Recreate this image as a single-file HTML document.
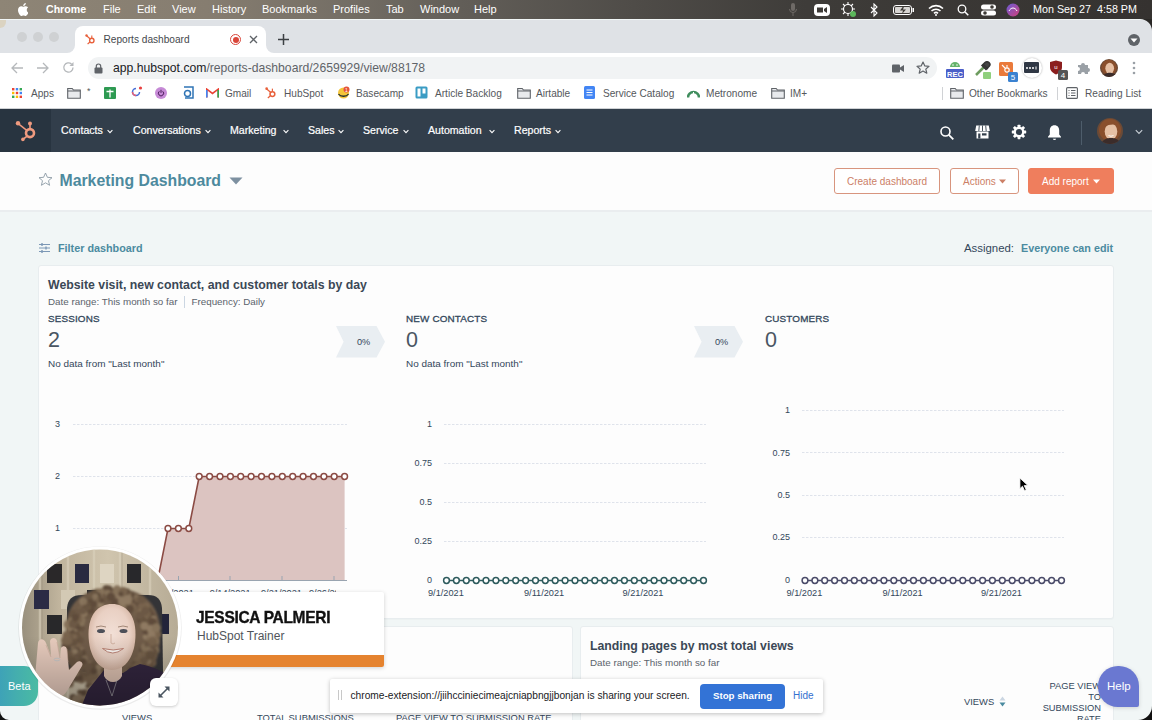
<!DOCTYPE html>
<html><head><meta charset="utf-8">
<style>
*{margin:0;padding:0;box-sizing:border-box}
html,body{width:1152px;height:720px;overflow:hidden;background:#f1f6f6;font-family:"Liberation Sans",sans-serif;position:relative}
.abs{position:absolute}
.t{position:absolute;white-space:nowrap;line-height:1}
#menubar{left:0;top:0;width:1152px;height:19px;background:linear-gradient(90deg,#8e8576 0%,#867d70 18%,#746e65 30%,#625e58 40%,#4f4c48 55%,#3e3c39 70%,#353230 100%)}
.mb{position:absolute;top:3.6px;color:#fff;font-size:11px;line-height:1;white-space:nowrap}
#tabstrip{left:0;top:20px;width:1152px;height:34px;background:#dfe2e6}
#tab{left:75px;top:26px;width:191px;height:28px;background:#fff;border-radius:8px 8px 0 0}
#toolbar{left:0;top:53px;width:1152px;height:31px;background:#fff}
#omni{left:88px;top:57px;width:849px;height:22px;background:#f1f3f4;border-radius:11px}
#bookmarks{left:0;top:83px;width:1152px;height:26px;background:#fff}
.bm{position:absolute;top:88.5px;font-size:10.1px;color:#54575b;line-height:1;white-space:nowrap}
#hsnav{left:0;top:109px;width:1152px;height:43px;background:#323e4b}
#hslogo{left:0;top:109px;width:51px;height:43px;background:#283440}
.nav{position:absolute;top:125px;color:#fff;font-size:10.6px;line-height:1;white-space:nowrap;-webkit-text-stroke:0.2px #fff}
.chev{position:absolute;top:128px;width:5px;height:5px;border-right:1.2px solid #fff;border-bottom:1.2px solid #fff;transform:rotate(45deg)}
#dhead{left:0;top:152px;width:1152px;height:60px;background:#fdfdfd;border-bottom:2px solid #eaedef}
.btn{position:absolute;border:1px solid #d8957e;border-radius:3px;color:#cc8066;font-size:10px;line-height:1;height:26px;background:#fff;white-space:nowrap}
.card{position:absolute;background:#fdfdfd;border:1px solid #e8edef;border-radius:3px;box-shadow:0 1px 1px rgba(0,0,0,0.02)}
</style></head><body>
<!-- mac menu bar -->
<div id="menubar" class="abs"></div>
<svg class="abs" style="left:17.5px;top:2.5px" width="10.5" height="13" viewBox="0 0 814 1000"><path fill="#fff" d="M788.1 340.9c-5.8 4.5-108.2 62.2-108.2 190.5 0 148.4 130.3 200.9 134.2 202.2-.6 3.2-20.7 71.9-68.7 141.9-42.8 61.6-87.5 123.1-155.5 123.1s-85.5-39.5-164-39.5c-76.5 0-103.7 40.8-165.9 40.8s-105.6-57-155.5-127C46.7 790.7 0 663 0 541.8c0-194.4 126.4-297.5 250.8-297.5 66.1 0 121.2 43.4 162.7 43.4 39.5 0 101.1-46 176.3-46 28.5 0 130.9 2.6 198.3 99.2zm-234-181.5c31.1-36.9 53.1-88.1 53.1-139.3 0-7.1-.6-14.3-1.9-20.1-50.6 1.9-110.8 33.7-147.1 75.8-28.5 32.4-55.1 83.6-55.1 135.5 0 7.8 1.3 15.6 1.9 18.1 3.2.6 8.4 1.3 13.6 1.3 45.4 0 102.5-30.4 135.5-71.3z"/></svg>
<span class="mb" style="left:46px;font-weight:bold;font-size:10.6px">Chrome</span>
<span class="mb" style="left:103px">File</span>
<span class="mb" style="left:137px">Edit</span>
<span class="mb" style="left:172px">View</span>
<span class="mb" style="left:212px">History</span>
<span class="mb" style="left:262px">Bookmarks</span>
<span class="mb" style="left:333px">Profiles</span>
<span class="mb" style="left:386px">Tab</span>
<span class="mb" style="left:420px">Window</span>
<span class="mb" style="left:474px">Help</span>
<span class="mb" style="left:1033px;font-size:10.75px">Mon Sep 27&nbsp; 4:58 PM</span>
<!-- menu extras -->
<svg class="abs" style="left:788px;top:3px" width="10" height="14" viewBox="0 0 10 14"><rect x="3" y="0" width="4" height="8" rx="2" fill="#6e6a66"/><path d="M1.5 6a3.5 3.5 0 0 0 7 0M5 10v3" stroke="#6e6a66" stroke-width="1" fill="none"/></svg>
<svg class="abs" style="left:814px;top:3px" width="16" height="14" viewBox="0 0 16 14"><rect x="0" y="1" width="16" height="12" rx="4" fill="#fff"/><path d="M3 4.5h6v5H3zM10 6l3-2v6l-3-2z" fill="#3d3a36"/></svg>
<svg class="abs" style="left:841px;top:2px" width="16" height="16" viewBox="0 0 16 16"><circle cx="7" cy="7" r="4.5" stroke="#fff" stroke-width="1.2" fill="none"/><path d="M7 0v3M7 11v3M0 7h3M11 7h3M2 2l2 2M10 10l2 2M12 2l-2 2M2 12l2-2" stroke="#fff" stroke-width="1.1"/><circle cx="12" cy="12" r="3" fill="#5cb85c"/></svg>
<svg class="abs" style="left:870px;top:3px" width="8" height="14" viewBox="0 0 8 14"><path d="M1 4l6 6-3 3V1l3 3-6 6" stroke="#fff" stroke-width="1.1" fill="none"/></svg>
<svg class="abs" style="left:893px;top:5px" width="22" height="10" viewBox="0 0 22 10"><rect x="0.5" y="0.5" width="18" height="9" rx="2.5" stroke="#fff" fill="none"/><rect x="19.5" y="3" width="1.5" height="4" fill="#fff"/><rect x="2" y="2" width="15" height="6" rx="1" fill="#d8d6d3"/><path d="M10 1.5L7 5.5h3l-1 3.5 4-4.5h-3l1-3z" fill="#3d3a36"/></svg>
<svg class="abs" style="left:928px;top:4px" width="16" height="12" viewBox="0 0 16 12"><path d="M1 4.5a10 10 0 0 1 14 0M3.5 7a6.5 6.5 0 0 1 9 0M6 9.3a3 3 0 0 1 4 0" stroke="#fff" stroke-width="1.6" fill="none"/><circle cx="8" cy="11" r="1" fill="#fff"/></svg>
<svg class="abs" style="left:957px;top:4px" width="12" height="12" viewBox="0 0 12 12"><circle cx="5" cy="5" r="3.8" stroke="#fff" stroke-width="1.3" fill="none"/><path d="M8 8l3.3 3.3" stroke="#fff" stroke-width="1.5"/></svg>
<svg class="abs" style="left:981px;top:4px" width="15" height="12" viewBox="0 0 15 12"><rect x="0" y="0.5" width="15" height="5" rx="2.5" fill="#fff"/><rect x="0" y="6.5" width="15" height="5" rx="2.5" fill="#fff"/><circle cx="11" cy="3" r="1.8" fill="#3d3a36"/><circle cx="4" cy="9" r="1.8" fill="#3d3a36"/></svg>
<svg class="abs" style="left:1006px;top:3px" width="14" height="14" viewBox="0 0 14 14"><defs><linearGradient id="sg" x1="0" y1="0" x2="1" y2="1"><stop offset="0" stop-color="#6a5bd6"/><stop offset="1" stop-color="#d0407a"/></linearGradient></defs><circle cx="7" cy="7" r="6.5" fill="url(#sg)"/><path d="M3 8c2-4 6-4 8 0" stroke="#fff" stroke-width="1" fill="none"/></svg>

<!-- chrome tab strip -->
<div id="tabstrip" class="abs"></div>
<svg class="abs" style="left:1140px;top:19px" width="12" height="12" viewBox="0 0 12 12"><path d="M0 0H12V12A12 12 0 0 0 0 0z" fill="#2a2826"/></svg>
<div class="abs" style="left:0;top:20px;width:6px;height:8px;background:#d8c9a8;border-radius:0 0 6px 0;opacity:.6"></div>
<div class="abs" style="left:17px;top:32px;width:10px;height:10px;border-radius:5px;background:#cfd1d3"></div>
<div class="abs" style="left:32.5px;top:32px;width:10px;height:10px;border-radius:5px;background:#cfd1d3"></div>
<div class="abs" style="left:48.7px;top:32px;width:10px;height:10px;border-radius:5px;background:#cfd1d3"></div>
<div id="tab" class="abs"></div>
<div class="abs" style="left:67px;top:45px;width:8px;height:8px;background:#fff"></div><div class="abs" style="left:67px;top:45px;width:8px;height:8px;background:#dfe2e6;border-bottom-right-radius:8px"></div><div class="abs" style="left:266px;top:45px;width:8px;height:8px;background:#fff"></div><div class="abs" style="left:266px;top:45px;width:8px;height:8px;background:#dfe2e6;border-bottom-left-radius:8px"></div>
<svg class="abs" style="left:85px;top:34px" width="11" height="11" viewBox="0 0 11 11"><circle cx="6.8" cy="6.5" r="2.2" stroke="#e8613c" stroke-width="1.4" fill="none"/><path d="M5.3 5L1.6 1.8M5 8l-2.4 2" stroke="#e8613c" stroke-width="1.2"/><circle cx="1.5" cy="1.5" r="1.2" fill="#e8613c"/><path d="M6.8 4.3V1.5" stroke="#e8613c" stroke-width="1.1"/></svg>
<span class="t" style="left:103.5px;top:35px;font-size:10.15px;color:#46494d">Reports dashboard</span>
<div class="abs" style="left:230px;top:34px;width:11px;height:11px;border-radius:6px;border:1.3px solid #d9463a;background:#fff"></div>
<div class="abs" style="left:232.5px;top:36.5px;width:6px;height:6px;border-radius:3px;background:#d9463a"></div>
<svg class="abs" style="left:249px;top:35px" width="9" height="9" viewBox="0 0 9 9"><path d="M1 1l7 7M8 1L1 8" stroke="#5f6368" stroke-width="1.3"/></svg>
<svg class="abs" style="left:278px;top:34px" width="11" height="11" viewBox="0 0 11 11"><path d="M5.5 0v11M0 5.5h11" stroke="#3c4043" stroke-width="1.5"/></svg>
<div class="abs" style="left:1128px;top:34px;width:12px;height:12px;border-radius:6px;background:#5f6368"></div>
<svg class="abs" style="left:1130px;top:38px" width="8" height="5" viewBox="0 0 8 5"><path d="M0.5 0.5h7L4 4.5z" fill="#fff"/></svg>

<!-- toolbar -->
<div id="toolbar" class="abs"></div>
<svg class="abs" style="left:11px;top:62px" width="13" height="12" viewBox="0 0 13 12"><path d="M12 6H1.5M6 1L1 6l5 5" stroke="#b5b8bb" stroke-width="1.3" fill="none"/></svg>
<svg class="abs" style="left:36px;top:62px" width="13" height="12" viewBox="0 0 13 12"><path d="M1 6h10.5M7 1l5 5-5 5" stroke="#b5b8bb" stroke-width="1.3" fill="none"/></svg>
<svg class="abs" style="left:62px;top:61px" width="13" height="13" viewBox="0 0 13 13"><path d="M11 6.5A4.6 4.6 0 1 1 9.6 3.2" stroke="#b5b8bb" stroke-width="1.3" fill="none"/><path d="M11.5 1v4h-4z" fill="#b5b8bb"/></svg>
<div id="omni" class="abs"></div>
<svg class="abs" style="left:94px;top:63px" width="9" height="11" viewBox="0 0 9 11"><rect x="0.5" y="4.5" width="8" height="6" rx="1" fill="#5f6368"/><path d="M2.3 5V3.2a2.2 2.2 0 0 1 4.4 0V5" stroke="#5f6368" stroke-width="1.2" fill="none"/></svg>
<span class="t" style="left:113px;top:62px;font-size:12.18px;color:#202124">app.hubspot.com<span style="color:#5f6368">/reports-dashboard/2659929/view/88178</span></span>
<svg class="abs" style="left:892px;top:64px" width="12" height="9" viewBox="0 0 12 9"><rect x="0" y="0.5" width="8" height="8" rx="1" fill="#5f6368"/><path d="M8 3.5l4-2.5v7l-4-2.5z" fill="#5f6368"/></svg>
<svg class="abs" style="left:916px;top:61px" width="14" height="14" viewBox="0 0 14 14"><path d="M7 1l1.8 3.9 4.2.4-3.2 2.8 1 4.1L7 10l-3.8 2.2 1-4.1L1 5.3l4.2-.4z" stroke="#5f6368" stroke-width="1.2" fill="none" stroke-linejoin="round"/></svg>
<!-- extensions -->
<svg class="abs" style="left:945px;top:59px" width="20" height="20" viewBox="0 0 20 20"><path d="M5 8a5 5 0 0 1 10 0z" fill="#65b36a"/><circle cx="8" cy="6" r=".8" fill="#fff"/><circle cx="12" cy="6" r=".8" fill="#fff"/><rect x="1" y="10" width="18" height="9" rx="1" fill="#4b5fc9"/><text x="10" y="17.5" font-size="7.5" font-family="Liberation Sans" fill="#fff" text-anchor="middle" font-weight="bold">REC</text></svg>
<svg class="abs" style="left:973px;top:60px" width="20" height="20" viewBox="0 0 20 20"><path d="M3 15L11 7" stroke="#6d9c5f" stroke-width="2.5"/><path d="M10 4l5 5M12 2.5a2 2 0 0 1 4 4l-3 3-4-4z" stroke="#333" stroke-width="1.5" fill="#444"/><rect x="10" y="12" width="8" height="7" rx="1" fill="#8fcf7d"/></svg>
<svg class="abs" style="left:999px;top:61.5px" width="20" height="20" viewBox="0 0 20 20"><rect x="0" y="0" width="14" height="14" rx="1.5" fill="#ea7a3b"/><circle cx="8" cy="8" r="2.2" stroke="#fff" stroke-width="1.2" fill="none"/><path d="M6.5 6.5L3 3M8 5.8V3" stroke="#fff" stroke-width="1.1"/><rect x="9" y="10" width="10" height="10" rx="1.5" fill="#3b82d1"/><text x="14" y="18.3" font-size="8" font-family="Liberation Sans" fill="#fff" text-anchor="middle">5</text></svg>
<div class="abs" style="left:1022px;top:58px;width:20px;height:20px;border-radius:10px;background:#fff;box-shadow:0 0 2px rgba(0,0,0,.35)"></div>
<div class="abs" style="left:1024px;top:62px;width:15px;height:11px;background:#303845;border-radius:1px"></div>
<svg class="abs" style="left:1025px;top:66px" width="13" height="4" viewBox="0 0 13 4"><circle cx="2" cy="2" r="1" fill="#fff"/><circle cx="5" cy="2" r="1" fill="#fff"/><circle cx="8" cy="2" r="1" fill="#fff"/><rect x="10.5" y="0.5" width="1" height="3" fill="#fff"/></svg>
<svg class="abs" style="left:1050px;top:60px" width="20" height="20" viewBox="0 0 20 20"><path d="M6 0.5l6 1.5v5c0 4-3 6-6 7.5C3 13 0 11 0 7V2z" fill="#8b1e1e"/><text x="6" y="8.5" font-size="6" font-family="Liberation Sans" fill="#fff" text-anchor="middle">u</text><rect x="8" y="10" width="10" height="10" rx="1.5" fill="#555"/><text x="13" y="18.3" font-size="8" font-family="Liberation Sans" fill="#fff" text-anchor="middle">4</text></svg>
<svg class="abs" style="left:1076px;top:61px" width="14" height="14" viewBox="0 0 14 14"><path d="M2 4h3a2 2 0 0 1 4 0h3v3a2 2 0 0 1 0 4v2H9a2 2 0 0 0-4 0H2v-3a2 2 0 0 0 0-4z" fill="#9aa0a6"/></svg>
<svg class="abs" style="left:1099.5px;top:59px" width="18" height="18" viewBox="0 0 26 26"><defs><clipPath id="av2"><circle cx="13" cy="13" r="13"/></clipPath></defs><g clip-path="url(#av2)"><rect width="26" height="26" fill="#6b4a36"/><circle cx="13" cy="12" r="11" fill="#8a4f2c"/><ellipse cx="14" cy="13.5" rx="6.3" ry="8" fill="#e6c0a4"/><path d="M4 26c2-5 6-6 10-6s8 1 10 6z" fill="#3b2c2a"/></g></svg>
<svg class="abs" style="left:1132px;top:61px" width="4" height="14" viewBox="0 0 4 14"><circle cx="2" cy="2" r="1.3" fill="#9aa0a6"/><circle cx="2" cy="7" r="1.3" fill="#9aa0a6"/><circle cx="2" cy="12" r="1.3" fill="#9aa0a6"/></svg>

<!-- bookmarks -->
<div id="bookmarks" class="abs"></div>
<svg class="abs" style="left:12px;top:88px" width="10" height="10" viewBox="0 0 10 10"><g><rect x="0" y="0" width="2.4" height="2.4" fill="#ea4335"/><rect x="3.8" y="0" width="2.4" height="2.4" fill="#4285f4"/><rect x="7.6" y="0" width="2.4" height="2.4" fill="#34a853"/><rect x="0" y="3.8" width="2.4" height="2.4" fill="#fbbc05"/><rect x="3.8" y="3.8" width="2.4" height="2.4" fill="#ea4335"/><rect x="7.6" y="3.8" width="2.4" height="2.4" fill="#4285f4"/><rect x="0" y="7.6" width="2.4" height="2.4" fill="#34a853"/><rect x="3.8" y="7.6" width="2.4" height="2.4" fill="#fbbc05"/><rect x="7.6" y="7.6" width="2.4" height="2.4" fill="#ea4335"/></g></svg>
<span class="bm" style="left:31px">Apps</span>
<svg class="abs" style="left:67px;top:87px" width="14" height="12" viewBox="0 0 14 12"><path d="M0.7 1.5h4.5l1.3 1.5h6.8v8.3H0.7z" stroke="#5f6368" stroke-width="1.1" fill="#e8eaed"/><path d="M0.7 4h12.6" stroke="#5f6368" stroke-width="1"/></svg>
<span class="bm" style="left:87px;top:87px;font-size:9px">*</span>
<div class="abs" style="left:104px;top:87px;width:12px;height:12px;background:#2e9a52;border-radius:1px"></div>
<svg class="abs" style="left:104px;top:87px" width="12" height="12" viewBox="0 0 12 12"><path d="M6 2.5v8M2.5 4.5h7" stroke="#fff" stroke-width="1.3"/></svg>
<svg class="abs" style="left:130px;top:86px" width="13" height="13" viewBox="0 0 13 13"><path d="M9.5 6A3.5 3.5 0 1 1 6 2.5" stroke="#4a6fd8" stroke-width="1.5" fill="none"/><path d="M6 9.5A3.5 3.5 0 0 1 2.5 6" stroke="#e85d75" stroke-width="1.5" fill="none"/><circle cx="10.5" cy="2" r="1.6" fill="#e84040"/></svg>
<div class="abs" style="left:155px;top:87px;width:12px;height:12px;border-radius:6px;background:#c68ad6"></div>
<svg class="abs" style="left:157px;top:89px" width="8" height="8" viewBox="0 0 8 8"><path d="M2.3 2.3A2.6 2.6 0 1 0 5.7 2.3" stroke="#4a1c5a" stroke-width="1" fill="none"/><path d="M4 0.8v3" stroke="#4a1c5a" stroke-width="1"/></svg>
<svg class="abs" style="left:181px;top:86px" width="13" height="13" viewBox="0 0 13 13"><path d="M3 1h9v11H4" stroke="#2f74b5" stroke-width="1.5" fill="none"/><circle cx="6.5" cy="7.5" r="3" stroke="#2f74b5" stroke-width="1.5" fill="none"/></svg>
<svg class="abs" style="left:206px;top:88px" width="13" height="10" viewBox="0 0 13 10"><path d="M0.8 9.5V1.2L6.5 5.5l5.7-4.3v8.3" stroke="#ea4335" stroke-width="1.6" fill="none"/><path d="M0.8 9.5V2" stroke="#4285f4" stroke-width="1.6"/><path d="M12.2 9.5V2" stroke="#34a853" stroke-width="1.6"/></svg>
<span class="bm" style="left:225px">Gmail</span>
<svg class="abs" style="left:265px;top:87px" width="12" height="12" viewBox="0 0 11 11"><circle cx="6.8" cy="6.5" r="2.2" stroke="#e8613c" stroke-width="1.4" fill="none"/><path d="M5.3 5L1.6 1.8M5 8l-2.4 2" stroke="#e8613c" stroke-width="1.2"/><circle cx="1.5" cy="1.5" r="1.2" fill="#e8613c"/><path d="M6.8 4.3V1.5" stroke="#e8613c" stroke-width="1.1"/></svg>
<span class="bm" style="left:284px">HubSpot</span>
<svg class="abs" style="left:337px;top:86px" width="13" height="13" viewBox="0 0 13 13"><circle cx="6.5" cy="7" r="5.5" fill="#f4c53a"/><path d="M1.5 8c2 3 8 3 10 0" stroke="#1d2d35" stroke-width="1.3" fill="none"/><circle cx="9.5" cy="3.5" r="3" fill="#e5533a"/><text x="9.5" y="5.7" font-size="5" font-family="Liberation Sans" fill="#fff" text-anchor="middle">1</text></svg>
<span class="bm" style="left:356px">Basecamp</span>
<svg class="abs" style="left:415px;top:86px" width="13" height="13" viewBox="0 0 13 13"><rect x="0.5" y="0.5" width="12" height="12" rx="1.5" fill="#3a9cc4"/><rect x="2.5" y="2.5" width="3" height="8" fill="#fff"/><rect x="7.5" y="2.5" width="3" height="5" fill="#fff"/></svg>
<span class="bm" style="left:435px">Article Backlog</span>
<svg class="abs" style="left:517px;top:87px" width="14" height="12" viewBox="0 0 14 12"><path d="M0.7 1.5h4.5l1.3 1.5h6.8v8.3H0.7z" stroke="#5f6368" stroke-width="1.1" fill="#e8eaed"/><path d="M0.7 4h12.6" stroke="#5f6368" stroke-width="1"/></svg>
<span class="bm" style="left:536px">Airtable</span>
<svg class="abs" style="left:584px;top:86px" width="11" height="13" viewBox="0 0 11 13"><rect x="0" y="0" width="11" height="13" rx="1.5" fill="#4285f4"/><path d="M2.5 4h6M2.5 6.5h6M2.5 9h6" stroke="#fff" stroke-width="1.1"/></svg>
<span class="bm" style="left:603px">Service Catalog</span>
<svg class="abs" style="left:687px;top:87px" width="13" height="11" viewBox="0 0 13 11"><path d="M1 10.5A5.5 5.5 0 0 1 12 10.5" stroke="#3f8d5d" stroke-width="2.6" fill="none"/><path d="M6.5 5v5" stroke="#fff" stroke-width="1"/></svg>
<span class="bm" style="left:706px">Metronome</span>
<svg class="abs" style="left:771px;top:87px" width="14" height="12" viewBox="0 0 14 12"><path d="M0.7 1.5h4.5l1.3 1.5h6.8v8.3H0.7z" stroke="#5f6368" stroke-width="1.1" fill="#e8eaed"/><path d="M0.7 4h12.6" stroke="#5f6368" stroke-width="1"/></svg>
<span class="bm" style="left:790px">IM+</span>
<div class="abs" style="left:942px;top:87px;width:1px;height:13px;background:#d0d2d5"></div>
<svg class="abs" style="left:950px;top:87px" width="14" height="12" viewBox="0 0 14 12"><path d="M0.7 1.5h4.5l1.3 1.5h6.8v8.3H0.7z" stroke="#5f6368" stroke-width="1.1" fill="#e8eaed"/><path d="M0.7 4h12.6" stroke="#5f6368" stroke-width="1"/></svg>
<span class="bm" style="left:969px">Other Bookmarks</span>
<div class="abs" style="left:1057px;top:87px;width:1px;height:13px;background:#d0d2d5"></div>
<svg class="abs" style="left:1066px;top:87px" width="12" height="12" viewBox="0 0 12 12"><rect x="0.6" y="0.6" width="10.8" height="10.8" rx="1" stroke="#5f6368" stroke-width="1.1" fill="none"/><path d="M2.5 3.5h1M5 3.5h4.5M2.5 6h1M5 6h4.5M2.5 8.5h1M5 8.5h4.5" stroke="#5f6368" stroke-width="1"/></svg>
<span class="bm" style="left:1085px">Reading List</span>

<div class="abs" style="left:0;top:108px;width:1152px;height:1px;background:#cfd2d5"></div>

<!-- hubspot nav -->
<div id="hsnav" class="abs"></div>
<div id="hslogo" class="abs"></div>
<svg class="abs" style="left:14px;top:118px" width="24" height="26" viewBox="0 0 24 26"><g fill="#ef9a7f" stroke="#ef9a7f"><circle cx="16" cy="15.1" r="4" stroke-width="2.6" fill="none"/><path d="M12.8 12.4L4.5 5.8" stroke-width="1.5"/><circle cx="4" cy="5.2" r="2.2" stroke="none"/><path d="M16 11V6" stroke-width="1.6"/><circle cx="16" cy="5.5" r="2" stroke="none"/><path d="M13.2 18.2L9.3 21" stroke-width="1.6"/><circle cx="8.9" cy="21.4" r="1.8" stroke="none"/></g></svg>
<span class="nav" style="left:61px">Contacts</span><svg class="abs" style="left:107px;top:128.5px" width="6" height="5" viewBox="0 0 6 5"><path d="M0.6 1.2L3 3.6 5.4 1.2" stroke="#fff" stroke-width="1.1" fill="none"/></svg>
<span class="nav" style="left:133px">Conversations</span><svg class="abs" style="left:204.5px;top:128.5px" width="6" height="5" viewBox="0 0 6 5"><path d="M0.6 1.2L3 3.6 5.4 1.2" stroke="#fff" stroke-width="1.1" fill="none"/></svg>
<span class="nav" style="left:230px">Marketing</span><svg class="abs" style="left:283.3px;top:128.5px" width="6" height="5" viewBox="0 0 6 5"><path d="M0.6 1.2L3 3.6 5.4 1.2" stroke="#fff" stroke-width="1.1" fill="none"/></svg>
<span class="nav" style="left:308px">Sales</span><svg class="abs" style="left:338px;top:128.5px" width="6" height="5" viewBox="0 0 6 5"><path d="M0.6 1.2L3 3.6 5.4 1.2" stroke="#fff" stroke-width="1.1" fill="none"/></svg>
<span class="nav" style="left:363px">Service</span><svg class="abs" style="left:402.5px;top:128.5px" width="6" height="5" viewBox="0 0 6 5"><path d="M0.6 1.2L3 3.6 5.4 1.2" stroke="#fff" stroke-width="1.1" fill="none"/></svg>
<span class="nav" style="left:428px">Automation</span><svg class="abs" style="left:489px;top:128.5px" width="6" height="5" viewBox="0 0 6 5"><path d="M0.6 1.2L3 3.6 5.4 1.2" stroke="#fff" stroke-width="1.1" fill="none"/></svg>
<span class="nav" style="left:514px">Reports</span><svg class="abs" style="left:555px;top:128.5px" width="6" height="5" viewBox="0 0 6 5"><path d="M0.6 1.2L3 3.6 5.4 1.2" stroke="#fff" stroke-width="1.1" fill="none"/></svg>
<svg class="abs" style="left:940px;top:125.5px" width="14" height="14" viewBox="0 0 14 14"><circle cx="5.5" cy="5.5" r="4.5" stroke="#fff" stroke-width="1.6" fill="none"/><path d="M8.8 8.8l4.5 4.5" stroke="#fff" stroke-width="1.8"/></svg>
<svg class="abs" style="left:975px;top:125px" width="15" height="14" viewBox="0 0 15 14"><path d="M1.2 0.5h12.6l1 5.5H0.2z" fill="#fff"/><path d="M4.3 0.5l-0.5 5.5M7.5 0.5v5.5M10.7 0.5l0.5 5.5" stroke="#323e4b" stroke-width="0.9"/><path d="M1.5 6.5h12v7h-12z" fill="#fff"/><rect x="3.2" y="8.5" width="2.2" height="5" fill="#323e4b"/><rect x="7" y="8.3" width="4.5" height="2.2" fill="#323e4b"/></svg>
<svg class="abs" style="left:1011px;top:124px" width="16" height="16" viewBox="0 0 16 16"><g fill="#fff"><circle cx="8" cy="8" r="5.4"/><rect x="6.6" y="0.8" width="2.8" height="3.2" rx="0.4" transform="rotate(0 8 8)"/><rect x="6.6" y="0.8" width="2.8" height="3.2" rx="0.4" transform="rotate(45 8 8)"/><rect x="6.6" y="0.8" width="2.8" height="3.2" rx="0.4" transform="rotate(90 8 8)"/><rect x="6.6" y="0.8" width="2.8" height="3.2" rx="0.4" transform="rotate(135 8 8)"/><rect x="6.6" y="0.8" width="2.8" height="3.2" rx="0.4" transform="rotate(180 8 8)"/><rect x="6.6" y="0.8" width="2.8" height="3.2" rx="0.4" transform="rotate(225 8 8)"/><rect x="6.6" y="0.8" width="2.8" height="3.2" rx="0.4" transform="rotate(270 8 8)"/><rect x="6.6" y="0.8" width="2.8" height="3.2" rx="0.4" transform="rotate(315 8 8)"/></g><circle cx="8" cy="8" r="3.1" fill="#323e4b"/></svg>
<svg class="abs" style="left:1047px;top:124px" width="15" height="17" viewBox="0 0 15 17"><path d="M7.5 1.2c-3 0-4.7 2.3-4.7 5v4.3L1 12.8v0.8h13v-0.8l-1.8-2.3V6.2c0-2.7-1.7-5-4.7-5z" fill="#fff"/><path d="M5.8 14.8a1.8 1.8 0 0 0 3.4 0z" fill="#fff"/></svg>
<div class="abs" style="left:1081px;top:121px;width:1px;height:24px;background:#4e5d6b"></div>
<svg class="abs" style="left:1097px;top:118px" width="26" height="26" viewBox="0 0 26 26"><defs><clipPath id="av1"><circle cx="13" cy="13" r="13"/></clipPath></defs><g clip-path="url(#av1)"><rect width="26" height="26" fill="#6b4a36"/><circle cx="13" cy="12" r="11" fill="#8a4f2c"/><ellipse cx="14" cy="13.5" rx="6.3" ry="8" fill="#e6c0a4"/><path d="M8 6c3-3 9-3 12 1-3-1-9-1-12 2z" fill="#8a4f2c"/><path d="M4 26c2-5 6-6 10-6s8 1 10 6z" fill="#3b2c2a"/><path d="M11.5 17.5q2.5 1.5 5 0" stroke="#fff" stroke-width="0.9" fill="none"/></g></svg>
<svg class="abs" style="left:1134.5px;top:129px" width="8" height="6" viewBox="0 0 8 6"><path d="M0.8 1.2L4 4.4 7.2 1.2" stroke="#c9d0d6" stroke-width="1.1" fill="none"/></svg>


<!-- dashboard header -->
<div id="dhead" class="abs"></div>
<svg class="abs" style="left:38px;top:172px" width="15" height="15" viewBox="0 0 15 15"><path d="M7.5 1l1.9 4.3 4.6.4-3.5 3 1.1 4.6-4.1-2.5-4.1 2.5 1.1-4.6-3.5-3 4.6-.4z" stroke="#8b9aa5" stroke-width="0.9" fill="none" stroke-linejoin="round"/></svg>
<span class="t" style="left:59.5px;top:172.7px;font-size:15.8px;font-weight:bold;color:#4d8a9e">Marketing Dashboard</span>
<svg class="abs" style="left:229px;top:177px" width="14" height="8" viewBox="0 0 14 8"><path d="M0.5 0.5h13L7 7.5z" fill="#7d90a0"/></svg>
<div class="btn" style="left:834px;top:168px;width:106px"><span class="t" style="left:12px;top:7.5px">Create dashboard</span></div>
<div class="btn" style="left:950px;top:168px;width:69px"><span class="t" style="left:12px;top:7.5px">Actions</span><svg class="abs" style="left:48px;top:10px" width="7" height="5" viewBox="0 0 7 5"><path d="M0 0.5h7L3.5 4.5z" fill="#cc8066"/></svg></div>
<div class="btn" style="left:1028px;top:168px;width:86px;background:#ef7e5d;border-color:#ef7e5d;color:#fff"><span class="t" style="left:13px;top:7.5px">Add report</span><svg class="abs" style="left:64px;top:10px" width="7" height="5" viewBox="0 0 7 5"><path d="M0 0.5h7L3.5 4.5z" fill="#fff"/></svg></div>


<!-- cards -->
<div class="card" style="left:38px;top:265px;width:1076px;height:354px"></div>
<div class="card" style="left:38px;top:626px;width:535px;height:120px"></div>
<div class="card" style="left:580px;top:626px;width:534px;height:120px"></div>
<!--CONTENT_START-->
<svg class="abs" style="left:39px;top:243px" width="11" height="10" viewBox="0 0 11 10"><path d="M0 1.5h11M0 5h11M0 8.5h11" stroke="#7c98b6" stroke-width="1.1"/><path d="M3 0v3M7 3.5v3M3 7v3" stroke="#7c98b6" stroke-width="1.4"/></svg>
<span class="t" style="left:58px;top:243px;font-size:10.8px;color:#4b8ba0;font-weight:bold;">Filter dashboard</span>
<span class="t" style="left:964px;top:243px;font-size:11.4px;color:#33475b;font-weight:normal;">Assigned:</span>
<span class="t" style="left:1021px;top:243px;font-size:10.75px;color:#4b8ba0;font-weight:bold;">Everyone can edit</span>
<span class="t" style="left:48px;top:279px;font-size:12.3px;color:#3b4856;font-weight:bold;">Website visit, new contact, and customer totals by day</span>
<span class="t" style="left:48px;top:297.4px;font-size:9.8px;color:#5b636c;font-weight:normal;">Date range: This month so far</span>
<div class="abs" style="left:184px;top:296px;width:1px;height:12px;background:#cbd6e2"></div>
<span class="t" style="left:191.5px;top:297.4px;font-size:9.8px;color:#5b636c;font-weight:normal;">Frequency: Daily</span>
<span class="t" style="left:48px;top:314px;font-size:9.9px;color:#33475b;font-weight:normal;letter-spacing:0.15px;-webkit-text-stroke:0.3px #33475b">SESSIONS</span>
<span class="t" style="left:48px;top:330px;font-size:21.5px;color:#4a5663;font-weight:normal;">2</span>
<span class="t" style="left:48px;top:358.5px;font-size:9.95px;color:#33475b;font-weight:normal;">No data from "Last month"</span>
<span class="t" style="left:406px;top:314px;font-size:9.9px;color:#33475b;font-weight:normal;letter-spacing:0.15px;-webkit-text-stroke:0.3px #33475b">NEW CONTACTS</span>
<span class="t" style="left:406px;top:330px;font-size:21.5px;color:#4a5663;font-weight:normal;">0</span>
<span class="t" style="left:406px;top:358.5px;font-size:9.95px;color:#33475b;font-weight:normal;">No data from "Last month"</span>
<span class="t" style="left:765px;top:314px;font-size:9.9px;color:#33475b;font-weight:normal;letter-spacing:0.15px;-webkit-text-stroke:0.3px #33475b">CUSTOMERS</span>
<span class="t" style="left:765px;top:330px;font-size:21.5px;color:#4a5663;font-weight:normal;">0</span>
<svg class="abs" style="left:336px;top:326px" width="50" height="32" viewBox="0 0 50 32"><path d="M0 0H40.5L49 15.7 40.5 31.4H0L7.6 15.7z" fill="#e9eef2"/></svg>
<span class="t" style="left:357px;top:337.5px;font-size:9.2px;color:#33475b;font-weight:normal;">0%</span>
<svg class="abs" style="left:694px;top:326px" width="50" height="32" viewBox="0 0 50 32"><path d="M0 0H40.5L49 15.7 40.5 31.4H0L7.6 15.7z" fill="#e9eef2"/></svg>
<span class="t" style="left:715px;top:337.5px;font-size:9.2px;color:#33475b;font-weight:normal;">0%</span>
<svg class="abs" style="left:0;top:0" width="1152" height="720" viewBox="0 0 1152 720">
<path d="M73 424.5H347" stroke="#dfe3eb" stroke-width="1" stroke-dasharray="2.5 1.5"/>
<path d="M73 476.5H347" stroke="#dfe3eb" stroke-width="1" stroke-dasharray="2.5 1.5"/>
<path d="M73 528.5H347" stroke="#dfe3eb" stroke-width="1" stroke-dasharray="2.5 1.5"/>
<polygon points="74.5,580.5 74.5,580.5 84.9,580.5 95.3,580.5 105.7,580.5 116.1,580.5 126.5,580.5 136.8,580.5 147.2,580.5 157.6,580.5 168.0,528.5 178.4,528.5 188.8,528.5 199.2,476.5 209.6,476.5 220.0,476.5 230.4,476.5 240.7,476.5 251.1,476.5 261.5,476.5 271.9,476.5 282.3,476.5 292.7,476.5 303.1,476.5 313.5,476.5 323.9,476.5 334.2,476.5 344.6,476.5 344.64,580.5" fill="#dcc4c1"/>
<polyline points="74.5,580.5 84.9,580.5 95.3,580.5 105.7,580.5 116.1,580.5 126.5,580.5 136.8,580.5 147.2,580.5 157.6,580.5 168.0,528.5 178.4,528.5 188.8,528.5 199.2,476.5 209.6,476.5 220.0,476.5 230.4,476.5 240.7,476.5 251.1,476.5 261.5,476.5 271.9,476.5 282.3,476.5 292.7,476.5 303.1,476.5 313.5,476.5 323.9,476.5 334.2,476.5 344.6,476.5" fill="none" stroke="#8b4b44" stroke-width="1.6"/>
<path d="M73 580.5H347" stroke="#99a4b0" stroke-width="1"/>
<path d="M178.5 576V580" stroke="#99a4b0" stroke-width="1"/>
<path d="M230 576V580" stroke="#99a4b0" stroke-width="1"/>
<path d="M282 576V580" stroke="#99a4b0" stroke-width="1"/>
<path d="M334 576V580" stroke="#99a4b0" stroke-width="1"/>
<circle cx="168.0" cy="528.5" r="2.9" fill="#fff" stroke="#8b4b44" stroke-width="1.5"/><circle cx="178.4" cy="528.5" r="2.9" fill="#fff" stroke="#8b4b44" stroke-width="1.5"/><circle cx="188.8" cy="528.5" r="2.9" fill="#fff" stroke="#8b4b44" stroke-width="1.5"/><circle cx="199.2" cy="476.5" r="2.9" fill="#fff" stroke="#8b4b44" stroke-width="1.5"/><circle cx="209.6" cy="476.5" r="2.9" fill="#fff" stroke="#8b4b44" stroke-width="1.5"/><circle cx="220.0" cy="476.5" r="2.9" fill="#fff" stroke="#8b4b44" stroke-width="1.5"/><circle cx="230.4" cy="476.5" r="2.9" fill="#fff" stroke="#8b4b44" stroke-width="1.5"/><circle cx="240.7" cy="476.5" r="2.9" fill="#fff" stroke="#8b4b44" stroke-width="1.5"/><circle cx="251.1" cy="476.5" r="2.9" fill="#fff" stroke="#8b4b44" stroke-width="1.5"/><circle cx="261.5" cy="476.5" r="2.9" fill="#fff" stroke="#8b4b44" stroke-width="1.5"/><circle cx="271.9" cy="476.5" r="2.9" fill="#fff" stroke="#8b4b44" stroke-width="1.5"/><circle cx="282.3" cy="476.5" r="2.9" fill="#fff" stroke="#8b4b44" stroke-width="1.5"/><circle cx="292.7" cy="476.5" r="2.9" fill="#fff" stroke="#8b4b44" stroke-width="1.5"/><circle cx="303.1" cy="476.5" r="2.9" fill="#fff" stroke="#8b4b44" stroke-width="1.5"/><circle cx="313.5" cy="476.5" r="2.9" fill="#fff" stroke="#8b4b44" stroke-width="1.5"/><circle cx="323.9" cy="476.5" r="2.9" fill="#fff" stroke="#8b4b44" stroke-width="1.5"/><circle cx="334.2" cy="476.5" r="2.9" fill="#fff" stroke="#8b4b44" stroke-width="1.5"/><circle cx="344.6" cy="476.5" r="2.9" fill="#fff" stroke="#8b4b44" stroke-width="1.5"/>
<path d="M444 424.5H706" stroke="#dfe3eb" stroke-width="1" stroke-dasharray="2.5 1.5"/>
<path d="M444 463.5H706" stroke="#dfe3eb" stroke-width="1" stroke-dasharray="2.5 1.5"/>
<path d="M444 502.5H706" stroke="#dfe3eb" stroke-width="1" stroke-dasharray="2.5 1.5"/>
<path d="M444 541.5H706" stroke="#dfe3eb" stroke-width="1" stroke-dasharray="2.5 1.5"/>
<path d="M446 580.5H704" stroke="#2e5b5d" stroke-width="1.6"/>
<circle cx="446.5" cy="580.5" r="2.9" fill="#fff" stroke="#2e5b5d" stroke-width="1.5"/><circle cx="456.4" cy="580.5" r="2.9" fill="#fff" stroke="#2e5b5d" stroke-width="1.5"/><circle cx="466.3" cy="580.5" r="2.9" fill="#fff" stroke="#2e5b5d" stroke-width="1.5"/><circle cx="476.2" cy="580.5" r="2.9" fill="#fff" stroke="#2e5b5d" stroke-width="1.5"/><circle cx="486.0" cy="580.5" r="2.9" fill="#fff" stroke="#2e5b5d" stroke-width="1.5"/><circle cx="495.9" cy="580.5" r="2.9" fill="#fff" stroke="#2e5b5d" stroke-width="1.5"/><circle cx="505.8" cy="580.5" r="2.9" fill="#fff" stroke="#2e5b5d" stroke-width="1.5"/><circle cx="515.7" cy="580.5" r="2.9" fill="#fff" stroke="#2e5b5d" stroke-width="1.5"/><circle cx="525.6" cy="580.5" r="2.9" fill="#fff" stroke="#2e5b5d" stroke-width="1.5"/><circle cx="535.5" cy="580.5" r="2.9" fill="#fff" stroke="#2e5b5d" stroke-width="1.5"/><circle cx="545.3" cy="580.5" r="2.9" fill="#fff" stroke="#2e5b5d" stroke-width="1.5"/><circle cx="555.2" cy="580.5" r="2.9" fill="#fff" stroke="#2e5b5d" stroke-width="1.5"/><circle cx="565.1" cy="580.5" r="2.9" fill="#fff" stroke="#2e5b5d" stroke-width="1.5"/><circle cx="575.0" cy="580.5" r="2.9" fill="#fff" stroke="#2e5b5d" stroke-width="1.5"/><circle cx="584.9" cy="580.5" r="2.9" fill="#fff" stroke="#2e5b5d" stroke-width="1.5"/><circle cx="594.8" cy="580.5" r="2.9" fill="#fff" stroke="#2e5b5d" stroke-width="1.5"/><circle cx="604.7" cy="580.5" r="2.9" fill="#fff" stroke="#2e5b5d" stroke-width="1.5"/><circle cx="614.5" cy="580.5" r="2.9" fill="#fff" stroke="#2e5b5d" stroke-width="1.5"/><circle cx="624.4" cy="580.5" r="2.9" fill="#fff" stroke="#2e5b5d" stroke-width="1.5"/><circle cx="634.3" cy="580.5" r="2.9" fill="#fff" stroke="#2e5b5d" stroke-width="1.5"/><circle cx="644.2" cy="580.5" r="2.9" fill="#fff" stroke="#2e5b5d" stroke-width="1.5"/><circle cx="654.1" cy="580.5" r="2.9" fill="#fff" stroke="#2e5b5d" stroke-width="1.5"/><circle cx="664.0" cy="580.5" r="2.9" fill="#fff" stroke="#2e5b5d" stroke-width="1.5"/><circle cx="673.8" cy="580.5" r="2.9" fill="#fff" stroke="#2e5b5d" stroke-width="1.5"/><circle cx="683.7" cy="580.5" r="2.9" fill="#fff" stroke="#2e5b5d" stroke-width="1.5"/><circle cx="693.6" cy="580.5" r="2.9" fill="#fff" stroke="#2e5b5d" stroke-width="1.5"/><circle cx="703.5" cy="580.5" r="2.9" fill="#fff" stroke="#2e5b5d" stroke-width="1.5"/>
<path d="M802 410.5H1064" stroke="#dfe3eb" stroke-width="1" stroke-dasharray="2.5 1.5"/>
<path d="M802 452.5H1064" stroke="#dfe3eb" stroke-width="1" stroke-dasharray="2.5 1.5"/>
<path d="M802 495.5H1064" stroke="#dfe3eb" stroke-width="1" stroke-dasharray="2.5 1.5"/>
<path d="M802 537.5H1064" stroke="#dfe3eb" stroke-width="1" stroke-dasharray="2.5 1.5"/>
<path d="M805 580.5H1062" stroke="#4a4b69" stroke-width="1.6"/>
<circle cx="805.0" cy="580.5" r="2.9" fill="#fff" stroke="#4a4b69" stroke-width="1.5"/><circle cx="814.9" cy="580.5" r="2.9" fill="#fff" stroke="#4a4b69" stroke-width="1.5"/><circle cx="824.7" cy="580.5" r="2.9" fill="#fff" stroke="#4a4b69" stroke-width="1.5"/><circle cx="834.6" cy="580.5" r="2.9" fill="#fff" stroke="#4a4b69" stroke-width="1.5"/><circle cx="844.5" cy="580.5" r="2.9" fill="#fff" stroke="#4a4b69" stroke-width="1.5"/><circle cx="854.3" cy="580.5" r="2.9" fill="#fff" stroke="#4a4b69" stroke-width="1.5"/><circle cx="864.2" cy="580.5" r="2.9" fill="#fff" stroke="#4a4b69" stroke-width="1.5"/><circle cx="874.1" cy="580.5" r="2.9" fill="#fff" stroke="#4a4b69" stroke-width="1.5"/><circle cx="883.9" cy="580.5" r="2.9" fill="#fff" stroke="#4a4b69" stroke-width="1.5"/><circle cx="893.8" cy="580.5" r="2.9" fill="#fff" stroke="#4a4b69" stroke-width="1.5"/><circle cx="903.7" cy="580.5" r="2.9" fill="#fff" stroke="#4a4b69" stroke-width="1.5"/><circle cx="913.5" cy="580.5" r="2.9" fill="#fff" stroke="#4a4b69" stroke-width="1.5"/><circle cx="923.4" cy="580.5" r="2.9" fill="#fff" stroke="#4a4b69" stroke-width="1.5"/><circle cx="933.2" cy="580.5" r="2.9" fill="#fff" stroke="#4a4b69" stroke-width="1.5"/><circle cx="943.1" cy="580.5" r="2.9" fill="#fff" stroke="#4a4b69" stroke-width="1.5"/><circle cx="953.0" cy="580.5" r="2.9" fill="#fff" stroke="#4a4b69" stroke-width="1.5"/><circle cx="962.8" cy="580.5" r="2.9" fill="#fff" stroke="#4a4b69" stroke-width="1.5"/><circle cx="972.7" cy="580.5" r="2.9" fill="#fff" stroke="#4a4b69" stroke-width="1.5"/><circle cx="982.6" cy="580.5" r="2.9" fill="#fff" stroke="#4a4b69" stroke-width="1.5"/><circle cx="992.4" cy="580.5" r="2.9" fill="#fff" stroke="#4a4b69" stroke-width="1.5"/><circle cx="1002.3" cy="580.5" r="2.9" fill="#fff" stroke="#4a4b69" stroke-width="1.5"/><circle cx="1012.2" cy="580.5" r="2.9" fill="#fff" stroke="#4a4b69" stroke-width="1.5"/><circle cx="1022.0" cy="580.5" r="2.9" fill="#fff" stroke="#4a4b69" stroke-width="1.5"/><circle cx="1031.9" cy="580.5" r="2.9" fill="#fff" stroke="#4a4b69" stroke-width="1.5"/><circle cx="1041.8" cy="580.5" r="2.9" fill="#fff" stroke="#4a4b69" stroke-width="1.5"/><circle cx="1051.6" cy="580.5" r="2.9" fill="#fff" stroke="#4a4b69" stroke-width="1.5"/><circle cx="1061.5" cy="580.5" r="2.9" fill="#fff" stroke="#4a4b69" stroke-width="1.5"/>
</svg>
<span class="t" style="left:55px;top:420px;font-size:9px;color:#33475b;font-weight:normal;">3</span>
<span class="t" style="left:55px;top:472px;font-size:9px;color:#33475b;font-weight:normal;">2</span>
<span class="t" style="left:55px;top:524px;font-size:9px;color:#33475b;font-weight:normal;">1</span>
<span class="t" style="left:392px;width:40px;text-align:right;top:420px;font-size:9px;color:#33475b">1</span>
<span class="t" style="left:392px;width:40px;text-align:right;top:459px;font-size:9px;color:#33475b">0.75</span>
<span class="t" style="left:392px;width:40px;text-align:right;top:498px;font-size:9px;color:#33475b">0.5</span>
<span class="t" style="left:392px;width:40px;text-align:right;top:537px;font-size:9px;color:#33475b">0.25</span>
<span class="t" style="left:392px;width:40px;text-align:right;top:576px;font-size:9px;color:#33475b">0</span>
<span class="t" style="left:750px;width:40px;text-align:right;top:406px;font-size:9px;color:#33475b">1</span>
<span class="t" style="left:750px;width:40px;text-align:right;top:448.5px;font-size:9px;color:#33475b">0.75</span>
<span class="t" style="left:750px;width:40px;text-align:right;top:491px;font-size:9px;color:#33475b">0.5</span>
<span class="t" style="left:750px;width:40px;text-align:right;top:533px;font-size:9px;color:#33475b">0.25</span>
<span class="t" style="left:750px;width:40px;text-align:right;top:576px;font-size:9px;color:#33475b">0</span>
<span class="t" style="left:428px;top:588.5px;font-size:9.2px;color:#33475b;font-weight:normal;">9/1/2021</span>
<span class="t" style="left:524px;top:588.5px;font-size:9.2px;color:#33475b;font-weight:normal;">9/11/2021</span>
<span class="t" style="left:622.5px;top:588.5px;font-size:9.2px;color:#33475b;font-weight:normal;">9/21/2021</span>
<span class="t" style="left:786.5px;top:588.5px;font-size:9.2px;color:#33475b;font-weight:normal;">9/1/2021</span>
<span class="t" style="left:882.5px;top:588.5px;font-size:9.2px;color:#33475b;font-weight:normal;">9/11/2021</span>
<span class="t" style="left:981px;top:588.5px;font-size:9.2px;color:#33475b;font-weight:normal;">9/21/2021</span>
<span class="t" style="left:158px;top:588.5px;font-size:9.2px;color:#33475b;font-weight:normal;">9/7/2021</span>
<span class="t" style="left:209.7px;top:588.5px;font-size:9.2px;color:#33475b;font-weight:normal;">9/14/2021</span>
<span class="t" style="left:261px;top:588.5px;font-size:9.2px;color:#33475b;font-weight:normal;">9/21/2021</span>
<div class="abs" style="left:309px;top:585px;width:27px;height:15px;overflow:hidden"><span class="t" style="left:0;top:3.5px;font-size:9.2px;color:#33475b">9/26/2021</span></div>
<span class="t" style="left:590px;top:640px;font-size:12.3px;color:#3b4856;font-weight:bold;">Landing pages by most total views</span>
<span class="t" style="left:590px;top:658px;font-size:9.8px;color:#5b636c;font-weight:normal;">Date range: This month so far</span>
<span class="t" style="left:122px;top:713px;font-size:9.4px;color:#33475b;font-weight:normal;">VIEWS</span>
<span class="t" style="left:257px;top:713px;font-size:9.4px;color:#33475b;font-weight:normal;">TOTAL SUBMISSIONS</span>
<span class="t" style="left:396px;top:713px;font-size:9.4px;color:#33475b;font-weight:normal;">PAGE VIEW TO SUBMISSION RATE</span>
<span class="t" style="left:964px;top:697px;font-size:9.4px;color:#33475b;font-weight:normal;">VIEWS</span>
<svg class="abs" style="left:998.5px;top:696px" width="7" height="11" viewBox="0 0 7 11"><path d="M0.5 4.5L3.5 0.5 6.5 4.5z" fill="#cbd6e2"/><path d="M0.5 6.5L3.5 10.5 6.5 6.5z" fill="#4b8ba0"/></svg>
<div class="t" style="left:1000px;width:101px;top:680.5px;font-size:9.3px;color:#33475b;text-align:right;line-height:11.2px">PAGE VIEW<br>TO<br>SUBMISSION<br>RATE</div>
<!--CONTENT_END-->
<!--OVERLAY_START-->
<!-- cursor -->
<svg class="abs" style="left:1018.5px;top:476.7px" width="11" height="15" viewBox="0 0 12 16"><path d="M1 1v11.5l2.8-2.6 2.2 4.8 1.9-.9-2.2-4.6H9.8z" fill="#000" stroke="#fff" stroke-width="0.9" stroke-linejoin="round"/></svg>
<!-- name card -->
<div class="abs" style="left:150px;top:592px;width:234px;height:75px;background:#fff;border-radius:2px;box-shadow:0 1px 4px rgba(0,0,0,0.18);overflow:hidden">
  <div class="abs" style="left:0;top:63px;width:234px;height:12px;background:#e5832f"></div>
</div>
<span class="t" style="left:196px;top:608.5px;font-size:15.5px;font-weight:bold;color:#111;letter-spacing:-0.3px;-webkit-text-stroke:0.35px #111;transform:scaleY(1.06);transform-origin:0 0">JESSICA PALMERI</span>
<span class="t" style="left:197px;top:629.5px;font-size:12px;color:#50555b">HubSpot Trainer</span>
<!-- beta tab -->
<div class="abs" style="left:-10px;top:666px;width:48px;height:40px;border-radius:0 14px 14px 0;background:linear-gradient(90deg,#3a9bbd 0%,#44aeae 55%,#4abba3 100%)"></div>
<span class="t" style="left:8px;top:681px;font-size:11px;color:#fff">Beta</span>
<!-- webcam -->
<svg class="abs" style="left:18px;top:546px" width="164" height="164" viewBox="0 0 164 164">
<defs>
<clipPath id="cc"><circle cx="82" cy="81.5" r="78"/></clipPath>
<radialGradient id="faceg" cx="50%" cy="45%" r="58%"><stop offset="0" stop-color="#f2dfd6"/><stop offset="0.65" stop-color="#e9d0c3"/><stop offset="1" stop-color="#cfae9b"/></radialGradient>
<linearGradient id="wall" x1="0" y1="0" x2="1" y2="0"><stop offset="0" stop-color="#958c7a"/><stop offset="0.25" stop-color="#c0b49d"/><stop offset="0.55" stop-color="#d0c5ae"/><stop offset="1" stop-color="#b5aa94"/></linearGradient>
<linearGradient id="shade" x1="0" y1="0" x2="0" y2="1"><stop offset="0" stop-color="#000" stop-opacity="0"/><stop offset="0.55" stop-color="#000" stop-opacity="0"/><stop offset="1" stop-color="#000" stop-opacity=".3"/></linearGradient>
<filter id="blur1"><feGaussianBlur stdDeviation="1.1"/></filter>
</defs>
<circle cx="82" cy="82" r="81.8" fill="#000" opacity=".07"/><circle cx="82" cy="81.5" r="81" fill="#fff"/>
<g clip-path="url(#cc)">
<rect x="0" y="0" width="164" height="164" fill="url(#wall)"/>
<path d="M22 0v164M50 0v164M76 0v164M102 0v164M132 0v164" stroke="#ddd3bf" stroke-width="2.5" opacity=".55"/>
<path d="M24 0v164M104 0v164" stroke="#8f8673" stroke-width="1" opacity=".35"/>
<rect x="29" y="18" width="15" height="19" fill="#2a2829"/>
<rect x="57" y="18" width="14" height="19" fill="#292a40"/>
<rect x="82" y="18" width="14" height="19" fill="#ded5c2"/>
<rect x="109" y="18" width="14" height="19" fill="#28282b"/>
<rect x="16" y="44" width="15" height="19" fill="#2b2b45"/>
<rect x="43" y="44" width="14" height="19" fill="#d3c9b4"/>
<rect x="69" y="44" width="14" height="12" fill="#2a2a2c"/>
<rect x="29" y="69" width="15" height="19" fill="#28282a"/>
<rect x="143" y="68" width="8" height="20" fill="#23243a"/>
<path d="M49 62c1-9 5-13 15-13h66c9 0 13 4 14 13l1 64H49z" fill="#343437"/>
<g filter="url(#blur1)">
<path d="M48 90c-2-30 14-48 46-48s50 18 48 48c0 18-4 28-10 34l-28 4-34-2c-6-8-20-20-22-36z" fill="#6f5c48"/>
<circle cx="78.4" cy="124.7" r="4.0" fill="#6c5844"/>
<circle cx="108.8" cy="59.8" r="3.8" fill="#8f7a62"/>
<circle cx="101.5" cy="126.7" r="3.5" fill="#78634d"/>
<circle cx="126.7" cy="113.9" r="4.4" fill="#6c5844"/>
<circle cx="133.5" cy="77.8" r="3.8" fill="#6c5844"/>
<circle cx="60.0" cy="73.3" r="4.7" fill="#6c5844"/>
<circle cx="61.5" cy="79.3" r="3.5" fill="#8f7a62"/>
<circle cx="121.4" cy="118.3" r="4.4" fill="#78634d"/>
<circle cx="126.6" cy="117.9" r="2.9" fill="#6c5844"/>
<circle cx="61.8" cy="81.6" r="2.6" fill="#78634d"/>
<circle cx="53.7" cy="93.0" r="4.3" fill="#5e4c3b"/>
<circle cx="60.3" cy="71.0" r="3.2" fill="#78634d"/>
<circle cx="82.6" cy="56.0" r="3.8" fill="#8f7a62"/>
<circle cx="56.4" cy="93.2" r="3.5" fill="#8f7a62"/>
<circle cx="128.2" cy="87.5" r="3.5" fill="#86725a"/>
<circle cx="135.0" cy="102.8" r="4.3" fill="#8f7a62"/>
<circle cx="104.8" cy="46.8" r="3.3" fill="#86725a"/>
<circle cx="60.0" cy="68.0" r="3.5" fill="#6c5844"/>
<circle cx="131.2" cy="77.9" r="4.0" fill="#6c5844"/>
<circle cx="89.6" cy="53.3" r="3.8" fill="#665340"/>
<circle cx="110.1" cy="57.3" r="3.4" fill="#665340"/>
<circle cx="67.6" cy="131.7" r="3.3" fill="#8f7a62"/>
<circle cx="118.9" cy="115.6" r="4.3" fill="#78634d"/>
<circle cx="91.2" cy="51.8" r="4.6" fill="#5e4c3b"/>
<circle cx="128.3" cy="111.9" r="3.8" fill="#78634d"/>
<circle cx="113.0" cy="49.2" r="3.1" fill="#5e4c3b"/>
<circle cx="136.4" cy="88.2" r="3.4" fill="#78634d"/>
<circle cx="114.6" cy="122.0" r="3.0" fill="#78634d"/>
<circle cx="138.5" cy="95.5" r="2.9" fill="#86725a"/>
<circle cx="132.7" cy="93.0" r="3.3" fill="#8f7a62"/>
<circle cx="79.6" cy="124.9" r="4.5" fill="#8f7a62"/>
<circle cx="69.6" cy="54.5" r="3.6" fill="#665340"/>
<circle cx="105.4" cy="53.6" r="3.4" fill="#6c5844"/>
<circle cx="55.8" cy="96.7" r="2.9" fill="#78634d"/>
<circle cx="62.0" cy="105.1" r="3.9" fill="#6c5844"/>
<circle cx="128.9" cy="92.1" r="2.7" fill="#86725a"/>
<circle cx="68.5" cy="68.8" r="3.0" fill="#5e4c3b"/>
<circle cx="115.6" cy="122.6" r="3.3" fill="#86725a"/>
<circle cx="60.0" cy="97.8" r="3.6" fill="#5e4c3b"/>
<circle cx="57.1" cy="96.8" r="2.8" fill="#665340"/>
<circle cx="73.9" cy="124.0" r="4.4" fill="#78634d"/>
<circle cx="58.5" cy="88.2" r="4.7" fill="#86725a"/>
<circle cx="133.7" cy="99.1" r="4.8" fill="#6c5844"/>
<circle cx="81.9" cy="55.9" r="3.3" fill="#78634d"/>
<circle cx="71.8" cy="121.7" r="3.7" fill="#8f7a62"/>
<circle cx="76.7" cy="125.0" r="4.4" fill="#78634d"/>
<circle cx="109.3" cy="48.3" r="4.2" fill="#78634d"/>
<circle cx="88.4" cy="43.2" r="4.3" fill="#5e4c3b"/>
<circle cx="91.5" cy="136.6" r="4.7" fill="#5e4c3b"/>
<circle cx="109.5" cy="49.9" r="3.3" fill="#86725a"/>
<circle cx="123.9" cy="109.4" r="3.6" fill="#86725a"/>
<circle cx="130.3" cy="64.5" r="3.6" fill="#665340"/>
<circle cx="70.6" cy="128.5" r="4.4" fill="#6c5844"/>
<circle cx="131.1" cy="67.3" r="4.2" fill="#5e4c3b"/>
<circle cx="123.9" cy="65.8" r="4.0" fill="#6c5844"/>
<circle cx="108.6" cy="45.6" r="3.4" fill="#5e4c3b"/>
<circle cx="92.6" cy="56.4" r="2.9" fill="#78634d"/>
<circle cx="134.6" cy="99.4" r="3.6" fill="#665340"/>
<circle cx="135.8" cy="86.6" r="3.3" fill="#8f7a62"/>
<circle cx="62.4" cy="81.7" r="4.3" fill="#665340"/>
<circle cx="70.3" cy="57.9" r="4.6" fill="#5e4c3b"/>
<circle cx="129.4" cy="88.9" r="4.5" fill="#6c5844"/>
<circle cx="93.6" cy="130.7" r="3.1" fill="#8f7a62"/>
<circle cx="75.4" cy="129.7" r="4.4" fill="#6c5844"/>
<circle cx="125.9" cy="70.8" r="3.6" fill="#8f7a62"/>
<circle cx="110.0" cy="53.4" r="4.4" fill="#8f7a62"/>
<circle cx="117.8" cy="118.8" r="3.7" fill="#5e4c3b"/>
<circle cx="100.9" cy="49.2" r="4.3" fill="#78634d"/>
<circle cx="87.7" cy="49.9" r="3.2" fill="#8f7a62"/>
<circle cx="55.1" cy="84.0" r="4.3" fill="#8f7a62"/>
<circle cx="127.3" cy="105.0" r="2.6" fill="#6c5844"/>
<circle cx="53.3" cy="89.9" r="4.2" fill="#6c5844"/>
<circle cx="55.1" cy="107.2" r="3.7" fill="#8f7a62"/>
<circle cx="49.8" cy="89.6" r="3.7" fill="#78634d"/>
<circle cx="79.8" cy="47.0" r="4.7" fill="#86725a"/>
<circle cx="134.3" cy="69.8" r="3.0" fill="#5e4c3b"/>
<circle cx="116.5" cy="119.4" r="3.5" fill="#6c5844"/>
<circle cx="75.5" cy="56.2" r="3.0" fill="#86725a"/>
<circle cx="103.6" cy="45.3" r="2.9" fill="#665340"/>
<circle cx="70.4" cy="60.8" r="3.1" fill="#78634d"/>
<circle cx="129.2" cy="84.4" r="4.7" fill="#5e4c3b"/>
<circle cx="120.3" cy="67.7" r="4.0" fill="#78634d"/>
<circle cx="56.6" cy="88.1" r="3.0" fill="#86725a"/>
<circle cx="125.8" cy="113.8" r="3.3" fill="#5e4c3b"/>
<circle cx="63.3" cy="104.6" r="3.3" fill="#8f7a62"/>
<circle cx="80.9" cy="138.7" r="2.8" fill="#78634d"/>
<circle cx="127.7" cy="85.7" r="3.1" fill="#6c5844"/>
<circle cx="123.4" cy="71.4" r="4.2" fill="#5e4c3b"/>
<circle cx="118.8" cy="56.0" r="4.7" fill="#5e4c3b"/>
<circle cx="55.4" cy="72.8" r="2.7" fill="#6c5844"/>
<circle cx="104.8" cy="56.7" r="4.6" fill="#86725a"/>
<circle cx="132.7" cy="75.5" r="4.3" fill="#6c5844"/>
<circle cx="66.1" cy="68.3" r="3.1" fill="#6c5844"/>
<circle cx="58.0" cy="103.3" r="3.8" fill="#86725a"/>
<circle cx="69.9" cy="67.8" r="4.1" fill="#6c5844"/>
<circle cx="129.8" cy="84.6" r="2.9" fill="#86725a"/>
<circle cx="66.1" cy="61.4" r="3.0" fill="#5e4c3b"/>
<circle cx="58.7" cy="92.0" r="3.3" fill="#6c5844"/>
<circle cx="127.3" cy="90.8" r="2.5" fill="#8f7a62"/>
<circle cx="60.3" cy="80.3" r="3.6" fill="#5e4c3b"/>
<circle cx="128.9" cy="120.8" r="3.5" fill="#5e4c3b"/>
<circle cx="50.4" cy="78.5" r="4.7" fill="#86725a"/>
<circle cx="76.2" cy="46.7" r="3.3" fill="#665340"/>
<circle cx="89.4" cy="55.9" r="4.8" fill="#6c5844"/>
<circle cx="111.1" cy="62.5" r="3.9" fill="#86725a"/>
<circle cx="63.6" cy="106.8" r="4.0" fill="#5e4c3b"/>
<circle cx="123.1" cy="59.8" r="3.1" fill="#78634d"/>
<circle cx="82.2" cy="59.2" r="2.9" fill="#86725a"/>
<circle cx="59.6" cy="104.8" r="4.7" fill="#8f7a62"/>
<circle cx="79.2" cy="123.2" r="4.5" fill="#78634d"/>
<circle cx="73.7" cy="118.9" r="3.4" fill="#5e4c3b"/>
<circle cx="86.4" cy="135.4" r="3.1" fill="#6c5844"/>
<circle cx="131.4" cy="117.1" r="2.8" fill="#8f7a62"/>
<circle cx="126.0" cy="101.0" r="3.2" fill="#78634d"/>
<circle cx="134.0" cy="116.6" r="4.5" fill="#78634d"/>
<circle cx="70.4" cy="54.4" r="4.5" fill="#5e4c3b"/>
<circle cx="97.9" cy="47.1" r="3.6" fill="#86725a"/>
<circle cx="87.2" cy="48.6" r="2.6" fill="#665340"/>
<circle cx="126.5" cy="64.6" r="4.2" fill="#8f7a62"/>
<circle cx="49.3" cy="90.7" r="4.4" fill="#665340"/>
<circle cx="54.7" cy="68.0" r="4.1" fill="#665340"/>
<circle cx="72.8" cy="64.2" r="2.6" fill="#665340"/>
<circle cx="72.0" cy="119.6" r="4.4" fill="#8f7a62"/>
<circle cx="125.4" cy="102.9" r="3.7" fill="#78634d"/>
<circle cx="61.3" cy="94.3" r="4.3" fill="#665340"/>
<circle cx="135.5" cy="72.4" r="2.7" fill="#8f7a62"/>
<circle cx="133.6" cy="110.3" r="3.1" fill="#6c5844"/>
<circle cx="114.5" cy="60.9" r="4.2" fill="#78634d"/>
<circle cx="91.0" cy="43.2" r="3.6" fill="#5e4c3b"/>
<circle cx="134.5" cy="114.2" r="3.2" fill="#6c5844"/>
<circle cx="62.9" cy="62.5" r="2.7" fill="#78634d"/>
<circle cx="73.3" cy="130.4" r="4.1" fill="#8f7a62"/>
<circle cx="64.0" cy="77.7" r="2.6" fill="#86725a"/>
<circle cx="127.7" cy="85.8" r="3.0" fill="#5e4c3b"/>
<circle cx="83.8" cy="132.7" r="3.6" fill="#5e4c3b"/>
<circle cx="99.1" cy="43.1" r="3.8" fill="#86725a"/>
<circle cx="139.7" cy="85.4" r="2.5" fill="#5e4c3b"/>
<circle cx="129.5" cy="111.4" r="4.8" fill="#86725a"/>
<circle cx="59.3" cy="123.3" r="4.6" fill="#6c5844"/>
<circle cx="63.7" cy="74.2" r="3.7" fill="#86725a"/>
<circle cx="48.6" cy="89.4" r="4.1" fill="#78634d"/>
<circle cx="48.7" cy="92.6" r="3.4" fill="#78634d"/>
<circle cx="133.8" cy="92.9" r="3.5" fill="#86725a"/>
<circle cx="88.5" cy="51.9" r="3.4" fill="#6c5844"/>
<circle cx="111.6" cy="63.0" r="4.2" fill="#5e4c3b"/>
<circle cx="83.5" cy="45.5" r="3.2" fill="#86725a"/>
<circle cx="129.2" cy="107.9" r="4.5" fill="#6c5844"/>
<circle cx="69.1" cy="123.3" r="3.1" fill="#6c5844"/>
<circle cx="87.6" cy="126.4" r="4.0" fill="#665340"/>
<circle cx="127.4" cy="77.0" r="3.1" fill="#8f7a62"/>
<circle cx="76.5" cy="134.0" r="4.3" fill="#5e4c3b"/>
<circle cx="127.1" cy="61.1" r="4.0" fill="#8f7a62"/>
<circle cx="53.0" cy="78.3" r="2.6" fill="#665340"/>
<circle cx="58.8" cy="115.1" r="2.8" fill="#86725a"/>
<circle cx="48.4" cy="96.3" r="3.8" fill="#78634d"/>
<circle cx="56.9" cy="98.9" r="3.2" fill="#665340"/>
<circle cx="91.0" cy="48.0" r="3.4" fill="#78634d"/>
<circle cx="81.2" cy="132.5" r="3.4" fill="#78634d"/>
<circle cx="73.0" cy="64.2" r="3.7" fill="#5e4c3b"/>
<circle cx="56.7" cy="79.2" r="3.3" fill="#5e4c3b"/>
<circle cx="57.6" cy="110.7" r="3.1" fill="#78634d"/>
<circle cx="75.4" cy="121.9" r="3.0" fill="#86725a"/>
<circle cx="107.0" cy="57.2" r="2.5" fill="#5e4c3b"/>
<circle cx="61.8" cy="122.5" r="3.0" fill="#86725a"/>
<circle cx="76.3" cy="122.0" r="3.1" fill="#86725a"/>
<circle cx="122.1" cy="121.8" r="3.9" fill="#78634d"/>
<circle cx="132.1" cy="118.2" r="3.4" fill="#665340"/>
<circle cx="50.3" cy="108.2" r="4.5" fill="#6c5844"/>
<circle cx="121.1" cy="121.2" r="4.3" fill="#5e4c3b"/>
<circle cx="133.0" cy="83.8" r="2.7" fill="#8f7a62"/>
<circle cx="122.7" cy="53.5" r="3.1" fill="#6c5844"/>
<circle cx="99.7" cy="128.1" r="4.7" fill="#6c5844"/>
<circle cx="134.2" cy="75.8" r="4.0" fill="#5e4c3b"/>
<circle cx="131.7" cy="115.4" r="2.5" fill="#78634d"/>
<circle cx="99.0" cy="139.8" r="4.0" fill="#86725a"/>
<circle cx="134.5" cy="81.8" r="3.7" fill="#5e4c3b"/>
<circle cx="83.1" cy="57.9" r="2.7" fill="#8f7a62"/>
<circle cx="127.3" cy="79.1" r="3.1" fill="#8f7a62"/>
<circle cx="134.4" cy="92.3" r="4.8" fill="#86725a"/>
<circle cx="134.6" cy="80.8" r="4.5" fill="#5e4c3b"/>
<circle cx="54.0" cy="85.0" r="2.6" fill="#5e4c3b"/>
<circle cx="83.6" cy="54.7" r="2.6" fill="#5e4c3b"/>
<circle cx="125.5" cy="62.9" r="2.7" fill="#78634d"/>
<circle cx="71.2" cy="50.2" r="3.0" fill="#6c5844"/>
<circle cx="79.6" cy="49.5" r="3.3" fill="#5e4c3b"/>
<circle cx="91.3" cy="50.2" r="3.0" fill="#78634d"/>
<circle cx="77.2" cy="135.1" r="3.0" fill="#78634d"/>
<circle cx="89.7" cy="139.4" r="2.8" fill="#8f7a62"/>
<circle cx="58.6" cy="93.0" r="3.0" fill="#5e4c3b"/>
<circle cx="122.4" cy="73.2" r="3.9" fill="#5e4c3b"/>
<circle cx="125.2" cy="103.6" r="3.9" fill="#5e4c3b"/>
<circle cx="125.9" cy="103.3" r="3.4" fill="#665340"/>
<circle cx="126.2" cy="61.8" r="4.8" fill="#78634d"/>
<circle cx="77.1" cy="124.6" r="4.7" fill="#665340"/>
<circle cx="57.6" cy="99.9" r="4.2" fill="#86725a"/>
<circle cx="132.9" cy="88.1" r="2.8" fill="#6c5844"/>
<circle cx="87.0" cy="130.9" r="4.7" fill="#6c5844"/>
<circle cx="53.6" cy="74.9" r="3.4" fill="#86725a"/>
<circle cx="111.0" cy="55.3" r="2.6" fill="#5e4c3b"/>
<circle cx="58.7" cy="105.0" r="4.2" fill="#5e4c3b"/>
<circle cx="131.9" cy="99.7" r="4.4" fill="#5e4c3b"/>
<circle cx="126.2" cy="100.8" r="2.6" fill="#6c5844"/>
<circle cx="92.1" cy="137.5" r="4.6" fill="#86725a"/>
<circle cx="69.5" cy="121.8" r="4.7" fill="#6c5844"/>
<circle cx="90.7" cy="136.9" r="3.2" fill="#86725a"/>
<circle cx="81.4" cy="135.1" r="3.9" fill="#665340"/>
<circle cx="125.8" cy="80.4" r="4.4" fill="#6c5844"/>
<circle cx="48.1" cy="99.6" r="4.7" fill="#5e4c3b"/>
<circle cx="105.3" cy="45.5" r="4.4" fill="#78634d"/>
<circle cx="125.8" cy="75.8" r="4.3" fill="#665340"/>
<circle cx="80.0" cy="134.2" r="2.8" fill="#78634d"/>
<circle cx="76.5" cy="126.5" r="3.3" fill="#8f7a62"/>
<circle cx="125.3" cy="109.8" r="4.2" fill="#78634d"/>
<circle cx="58.8" cy="116.1" r="3.6" fill="#8f7a62"/>
<circle cx="72.6" cy="135.5" r="4.5" fill="#6c5844"/>
<circle cx="90.8" cy="127.4" r="2.7" fill="#5e4c3b"/>
<circle cx="140.5" cy="88.5" r="2.9" fill="#78634d"/>
<circle cx="57.9" cy="113.8" r="4.1" fill="#665340"/>
<circle cx="51.5" cy="81.0" r="4.2" fill="#86725a"/>
<circle cx="82.9" cy="133.2" r="3.4" fill="#665340"/>
<circle cx="91.5" cy="132.8" r="2.9" fill="#78634d"/>
<circle cx="61.0" cy="73.5" r="3.4" fill="#78634d"/>
<circle cx="58.0" cy="90.3" r="4.4" fill="#665340"/>
<circle cx="61.6" cy="99.8" r="2.5" fill="#78634d"/>
<circle cx="118.7" cy="51.6" r="2.6" fill="#86725a"/>
<circle cx="97.6" cy="126.9" r="3.9" fill="#8f7a62"/>
<circle cx="58.8" cy="89.1" r="3.9" fill="#665340"/>
<circle cx="126.3" cy="80.0" r="3.9" fill="#8f7a62"/>
<circle cx="74.5" cy="120.3" r="3.3" fill="#6c5844"/>
<circle cx="59.9" cy="66.2" r="3.0" fill="#6c5844"/>
<circle cx="110.2" cy="55.3" r="3.4" fill="#8f7a62"/>
<circle cx="80.4" cy="126.5" r="4.3" fill="#8f7a62"/>
<circle cx="55.6" cy="96.2" r="4.3" fill="#665340"/>
<circle cx="54.2" cy="78.4" r="2.7" fill="#78634d"/>
<circle cx="64.7" cy="115.0" r="4.8" fill="#665340"/>
<circle cx="77.6" cy="137.4" r="3.2" fill="#8f7a62"/>
<circle cx="122.8" cy="65.0" r="2.5" fill="#86725a"/>
<circle cx="70.4" cy="60.3" r="3.4" fill="#6c5844"/>
<circle cx="62.0" cy="106.7" r="2.8" fill="#6c5844"/>
<circle cx="56.3" cy="118.4" r="3.6" fill="#78634d"/>
<circle cx="116.9" cy="117.6" r="2.8" fill="#5e4c3b"/>
<circle cx="129.3" cy="115.2" r="3.4" fill="#8f7a62"/>
<circle cx="112.5" cy="123.4" r="2.7" fill="#5e4c3b"/>
<circle cx="49.8" cy="94.8" r="4.7" fill="#78634d"/>
<circle cx="79.8" cy="136.4" r="2.6" fill="#5e4c3b"/>
<circle cx="77.7" cy="131.9" r="4.0" fill="#6c5844"/>
<circle cx="128.3" cy="67.3" r="4.4" fill="#78634d"/>
<circle cx="65.4" cy="55.6" r="3.9" fill="#8f7a62"/>
<circle cx="119.4" cy="53.6" r="2.9" fill="#78634d"/>
<circle cx="138.6" cy="104.5" r="2.9" fill="#86725a"/>
<circle cx="120.0" cy="118.6" r="4.2" fill="#78634d"/>
<circle cx="133.4" cy="102.9" r="4.2" fill="#6c5844"/>
<circle cx="75.6" cy="57.9" r="3.4" fill="#5e4c3b"/>
<circle cx="54.3" cy="78.5" r="3.2" fill="#5e4c3b"/>
<circle cx="81.0" cy="127.5" r="3.4" fill="#86725a"/>
<circle cx="57.1" cy="105.4" r="2.6" fill="#8f7a62"/>
<circle cx="133.3" cy="88.4" r="3.5" fill="#8f7a62"/>
<circle cx="101.4" cy="51.6" r="2.9" fill="#5e4c3b"/>
<circle cx="66.7" cy="112.7" r="3.3" fill="#86725a"/>
<circle cx="126.8" cy="114.3" r="3.7" fill="#6c5844"/>
<circle cx="127.5" cy="101.2" r="4.6" fill="#86725a"/>
<circle cx="100.9" cy="50.7" r="2.6" fill="#8f7a62"/>
<circle cx="127.2" cy="65.0" r="4.3" fill="#6c5844"/>
<circle cx="123.3" cy="53.5" r="4.2" fill="#6c5844"/>
<circle cx="47.6" cy="94.5" r="4.6" fill="#78634d"/>
<circle cx="77.2" cy="50.5" r="3.0" fill="#86725a"/>
<circle cx="66.0" cy="67.6" r="3.2" fill="#8f7a62"/>
<circle cx="87.1" cy="137.9" r="2.8" fill="#8f7a62"/>
<circle cx="132.6" cy="82.8" r="3.9" fill="#8f7a62"/>
<circle cx="56.7" cy="90.5" r="2.6" fill="#78634d"/>
<circle cx="59.6" cy="117.0" r="3.1" fill="#86725a"/>
<circle cx="121.8" cy="69.5" r="4.3" fill="#6c5844"/>
<circle cx="97.8" cy="57.2" r="4.5" fill="#5e4c3b"/>
<circle cx="55.4" cy="77.4" r="4.5" fill="#6c5844"/>
<circle cx="93.5" cy="134.3" r="4.5" fill="#665340"/>
<circle cx="104.8" cy="55.4" r="4.8" fill="#8f7a62"/>
<circle cx="116.8" cy="123.2" r="2.7" fill="#78634d"/>
<circle cx="136.4" cy="105.9" r="3.1" fill="#665340"/>
<circle cx="138.2" cy="82.0" r="4.6" fill="#86725a"/>
<circle cx="89.4" cy="46.8" r="3.0" fill="#86725a"/>
<circle cx="65.0" cy="64.8" r="3.7" fill="#6c5844"/>
<circle cx="118.3" cy="119.8" r="4.0" fill="#6c5844"/>
<circle cx="132.5" cy="106.3" r="3.2" fill="#8f7a62"/>
<circle cx="71.6" cy="121.5" r="3.8" fill="#8f7a62"/>
<circle cx="119.4" cy="121.6" r="4.4" fill="#78634d"/>
<circle cx="95.4" cy="128.5" r="2.7" fill="#665340"/>
<circle cx="88.5" cy="138.1" r="4.7" fill="#6c5844"/>
<circle cx="69.0" cy="58.2" r="3.3" fill="#665340"/>
<circle cx="57.6" cy="71.5" r="3.7" fill="#5e4c3b"/>
<circle cx="94.4" cy="139.8" r="2.6" fill="#8f7a62"/>
<circle cx="129.0" cy="97.9" r="2.9" fill="#6c5844"/>
<circle cx="134.5" cy="95.3" r="4.7" fill="#78634d"/>
<circle cx="59.7" cy="113.8" r="4.0" fill="#665340"/>
<circle cx="66.1" cy="55.9" r="2.9" fill="#86725a"/>
<circle cx="132.4" cy="109.0" r="4.8" fill="#665340"/>
<circle cx="102.8" cy="47.9" r="2.5" fill="#5e4c3b"/>
<circle cx="92.8" cy="50.7" r="4.2" fill="#5e4c3b"/>
<circle cx="61.9" cy="146.1" r="2.7" fill="#665340"/>
<circle cx="62.0" cy="114.8" r="3.8" fill="#665340"/>
<circle cx="68.6" cy="153.8" r="3.5" fill="#86725a"/>
<circle cx="63.2" cy="161.2" r="4.3" fill="#6c5844"/>
<circle cx="85.4" cy="112.8" r="3.0" fill="#78634d"/>
<circle cx="84.0" cy="122.7" r="2.8" fill="#86725a"/>
<circle cx="59.3" cy="132.6" r="3.7" fill="#5e4c3b"/>
<circle cx="78.3" cy="147.3" r="4.5" fill="#5e4c3b"/>
<circle cx="69.9" cy="140.1" r="2.5" fill="#6c5844"/>
<circle cx="68.6" cy="150.4" r="3.6" fill="#86725a"/>
<circle cx="82.0" cy="132.8" r="3.7" fill="#8f7a62"/>
<circle cx="86.6" cy="119.7" r="2.6" fill="#6c5844"/>
<circle cx="75.6" cy="120.6" r="4.5" fill="#665340"/>
<circle cx="53.1" cy="114.2" r="3.9" fill="#665340"/>
<circle cx="53.6" cy="115.6" r="2.6" fill="#8f7a62"/>
<circle cx="80.9" cy="122.6" r="4.4" fill="#8f7a62"/>
<circle cx="85.9" cy="115.5" r="4.2" fill="#665340"/>
<circle cx="59.8" cy="117.9" r="2.6" fill="#665340"/>
<circle cx="55.3" cy="151.8" r="3.8" fill="#5e4c3b"/>
<circle cx="55.8" cy="117.2" r="4.0" fill="#78634d"/>
<circle cx="63.2" cy="129.8" r="3.0" fill="#86725a"/>
<circle cx="61.8" cy="127.0" r="3.9" fill="#86725a"/>
<circle cx="74.9" cy="137.2" r="3.1" fill="#665340"/>
<circle cx="53.2" cy="133.9" r="3.4" fill="#6c5844"/>
<circle cx="65.2" cy="149.3" r="3.6" fill="#78634d"/>
<circle cx="79.1" cy="155.9" r="3.6" fill="#86725a"/>
<circle cx="58.5" cy="112.1" r="2.9" fill="#6c5844"/>
<circle cx="52.2" cy="138.0" r="3.5" fill="#78634d"/>
<circle cx="74.0" cy="120.4" r="4.1" fill="#665340"/>
<circle cx="60.8" cy="120.8" r="4.4" fill="#6c5844"/>
<circle cx="70.6" cy="164.5" r="3.6" fill="#6c5844"/>
<circle cx="75.9" cy="130.8" r="3.3" fill="#5e4c3b"/>
<circle cx="68.0" cy="146.2" r="3.2" fill="#86725a"/>
<circle cx="62.0" cy="159.8" r="3.5" fill="#5e4c3b"/>
<circle cx="74.6" cy="148.5" r="3.7" fill="#6c5844"/>
<circle cx="65.2" cy="129.3" r="2.8" fill="#5e4c3b"/>
<circle cx="77.2" cy="151.3" r="2.8" fill="#5e4c3b"/>
<circle cx="78.2" cy="125.6" r="3.0" fill="#86725a"/>
<circle cx="69.6" cy="158.9" r="3.0" fill="#78634d"/>
<circle cx="62.2" cy="152.0" r="4.2" fill="#8f7a62"/>
<circle cx="57.9" cy="120.3" r="3.0" fill="#86725a"/>
<circle cx="74.9" cy="130.5" r="3.0" fill="#78634d"/>
<circle cx="61.8" cy="162.6" r="4.5" fill="#78634d"/>
<circle cx="66.6" cy="164.1" r="4.1" fill="#665340"/>
<circle cx="63.3" cy="126.5" r="2.7" fill="#6c5844"/>
<circle cx="62.7" cy="158.9" r="3.4" fill="#6c5844"/>
<circle cx="67.2" cy="153.9" r="3.9" fill="#8f7a62"/>
<circle cx="52.8" cy="125.6" r="4.0" fill="#6c5844"/>
<circle cx="80.2" cy="160.1" r="3.4" fill="#8f7a62"/>
<circle cx="74.3" cy="146.3" r="4.2" fill="#665340"/>
<circle cx="79.4" cy="158.6" r="4.0" fill="#665340"/>
<circle cx="74.2" cy="124.1" r="2.9" fill="#6c5844"/>
<circle cx="69.2" cy="128.6" r="3.8" fill="#6c5844"/>
<circle cx="86.0" cy="124.8" r="3.3" fill="#665340"/>
<circle cx="75.9" cy="125.3" r="3.3" fill="#5e4c3b"/>
<circle cx="52.7" cy="157.5" r="3.5" fill="#665340"/>
<circle cx="76.9" cy="153.2" r="3.3" fill="#5e4c3b"/>
<circle cx="86.5" cy="117.6" r="3.0" fill="#78634d"/>
<circle cx="58.1" cy="153.4" r="4.4" fill="#8f7a62"/>
<circle cx="65.2" cy="156.9" r="3.4" fill="#78634d"/>
<circle cx="79.3" cy="139.1" r="3.8" fill="#86725a"/>
<circle cx="71.8" cy="133.7" r="4.4" fill="#78634d"/>
<circle cx="71.5" cy="161.4" r="4.0" fill="#8f7a62"/>
<circle cx="65.5" cy="115.0" r="3.0" fill="#5e4c3b"/>
<circle cx="54.3" cy="116.0" r="4.3" fill="#665340"/>
<circle cx="78.5" cy="130.7" r="3.0" fill="#78634d"/>
<circle cx="63.5" cy="133.2" r="4.4" fill="#78634d"/>
<circle cx="69.6" cy="120.7" r="4.4" fill="#6c5844"/>
<circle cx="82.8" cy="145.6" r="3.4" fill="#8f7a62"/>
<circle cx="79.4" cy="155.2" r="2.8" fill="#665340"/>
<circle cx="76.3" cy="155.4" r="4.1" fill="#5e4c3b"/>
<circle cx="76.7" cy="153.3" r="3.4" fill="#78634d"/>
<circle cx="62.2" cy="131.9" r="3.0" fill="#5e4c3b"/>
<circle cx="77.8" cy="137.5" r="4.1" fill="#86725a"/>
<circle cx="65.6" cy="146.7" r="3.1" fill="#5e4c3b"/>
</g>
<path d="M86 124c8 6 18 6 26-2l10 -4c12 2 24 8 32 14v32H62l8-20z" fill="#33263f"/>
<path d="M86 118h18v12c-4 8-14 8-18 0z" fill="#dcc0b0"/>
<path d="M88 134l6 16 5-16" stroke="#bbb" stroke-width=".6" fill="none"/>
<path d="M70.5 88c0-20 10-30 23.5-30s23.5 10 23.5 30c0 22-10 36-23.5 36S70.5 110 70.5 88z" fill="url(#faceg)"/>
<ellipse cx="83" cy="85" rx="4" ry="2" fill="#4d4f58"/><ellipse cx="105.5" cy="85" rx="4" ry="2" fill="#4d4f58"/>
<path d="M78 81q5-2 10 0M100 81q5-2 10 0" stroke="#9a7f6e" stroke-width=".9" fill="none"/>
<path d="M93 88v9q2 2 4 0" stroke="#d2b2a2" stroke-width="1" fill="none"/>
<path d="M84.5 102.5q10 9 21 0q-10 3-21 0z" fill="#fbf6f2" stroke="#b5786a" stroke-width=".9"/>
<path d="M20 97c1-5 6-5 8 0l5 13-1-15c1-4 6-4 7 0l3 17 1-10c2-3 6-2 6 2l2 20 8-8c3-2 7 1 5 4l-15 25c-4 6-10 10-18 10-10-4-12-14-14-24z" fill="#e7cbbd"/>
<path d="M28 99l5 12M39 96l3 16M49 103l1 13" stroke="#c9aa98" stroke-width=".6" fill="none"/>
<ellipse cx="39" cy="113.5" rx="3" ry="1.3" fill="none" stroke="#c8c8c8" stroke-width="1"/>
<rect x="0" y="0" width="164" height="164" fill="url(#shade)"/>
</g></svg>
<!-- expand button -->
<div class="abs" style="left:150px;top:678px;width:28px;height:28px;background:#fff;border-radius:6px;box-shadow:0 1px 3px rgba(0,0,0,0.2)"></div>
<svg class="abs" style="left:156px;top:684px" width="16" height="16" viewBox="0 0 16 16"><path d="M3.5 12.5l9-9" stroke="#4a5560" stroke-width="1.6"/><path d="M8.5 2.5h5v5zM2.5 8.5v5h5z" fill="#4a5560"/></svg>
<!-- sharing bar -->
<div class="abs" style="left:330px;top:679px;width:493px;height:34px;background:#fff;border-radius:2px;box-shadow:0 1px 4px rgba(0,0,0,0.25)"></div>
<div class="abs" style="left:338px;top:690px;width:1px;height:10px;background:#c8c8c8"></div>
<div class="abs" style="left:341px;top:690px;width:1px;height:10px;background:#c8c8c8"></div>
<span class="t" style="left:350.5px;top:691px;font-size:10.2px;color:#202124">chrome-extension://jiihcciniecimeajcniapbngjjbonjan is sharing your screen.</span>
<div class="abs" style="left:700px;top:683.5px;width:85px;height:25px;background:#3373d6;border-radius:4px"></div>
<span class="t" style="left:713px;top:691px;font-size:9.7px;color:#fff;font-weight:bold">Stop sharing</span>
<span class="t" style="left:793px;top:691px;font-size:10px;color:#3470d0">Hide</span>
<!-- help -->
<div class="abs" style="left:1098px;top:666px;width:41px;height:41px;background:#6a78d1;border-radius:20px 20px 2px 20px;box-shadow:0 1px 4px rgba(0,0,0,0.15)"></div>
<span class="t" style="left:1107px;top:681px;font-size:11.5px;color:#fff">Help</span>
<!-- screen corner -->
<svg class="abs" style="left:0;top:711px" width="9" height="9" viewBox="0 0 9 9"><path d="M0 0v9H9A9 9 0 0 1 0 0z" fill="#111"/></svg>
<svg class="abs" style="left:1138px;top:706px" width="14" height="14" viewBox="0 0 14 14"><path d="M14 0v14H0A14 14 0 0 0 14 0z" fill="#111"/></svg>

<!--OVERLAY_END-->
</body></html>
